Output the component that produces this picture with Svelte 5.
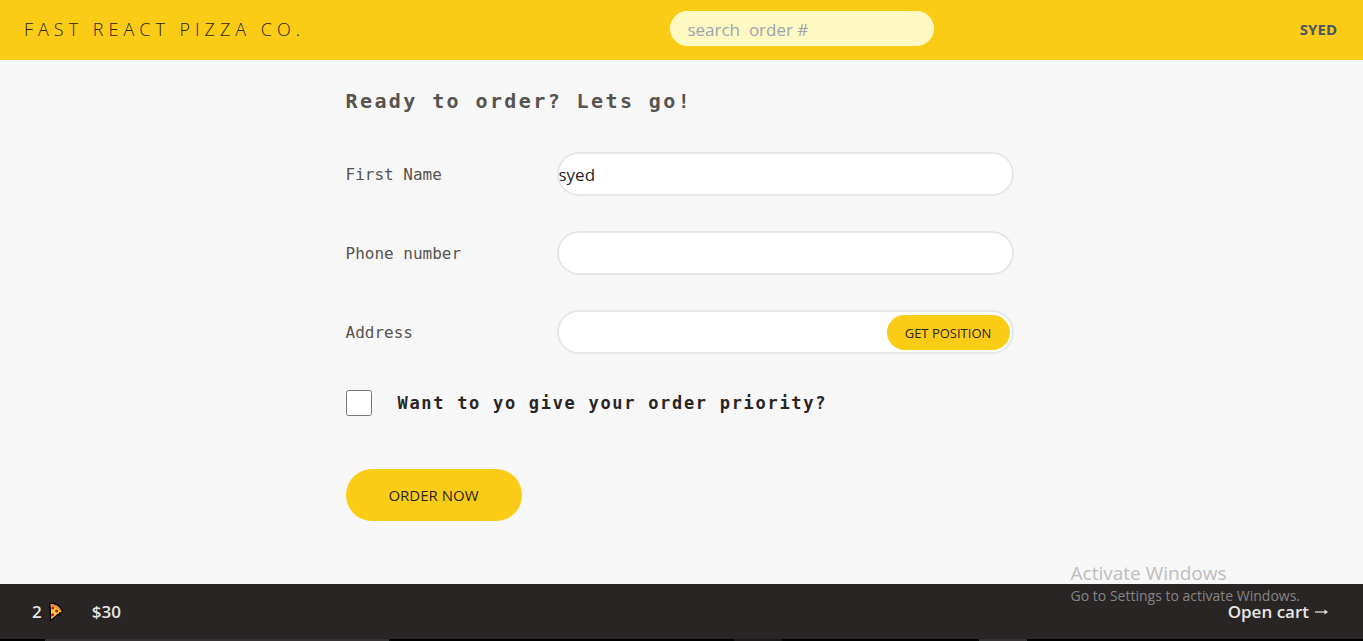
<script>
  let search = $state('');
  let firstName = $state('syed');
  let phone = $state('');
  let address = $state('');
  let priority = $state(false);
</script>

<div class="app">
  <header>
    <a class="brand" href="#home">Fast React Pizza Co.</a>
    <input class="search" type="text" aria-label="Search order number" placeholder="search  order #" bind:value={search} />
    <p class="user">syed</p>
  </header>

  <main>
    <h2>Ready to order? Lets go!</h2>
    <form onsubmit={(e) => e.preventDefault()}>
      <div class="row">
        <label for="name">First Name</label>
        <div class="field"><input id="name" type="text" bind:value={firstName} /></div>
      </div>
      <div class="row">
        <label for="phone">Phone number</label>
        <div class="field"><input id="phone" type="tel" bind:value={phone} /></div>
      </div>
      <div class="row">
        <label for="address">Address</label>
        <div class="field">
          <input id="address" type="text" bind:value={address} />
          <button class="position" type="button">Get position</button>
        </div>
      </div>
      <div class="priority">
        <input id="priority" type="checkbox" bind:checked={priority} />
        <label for="priority">Want to yo give your order priority?</label>
      </div>
      <button class="order" type="submit">Order now</button>
    </form>
  </main>

  <footer>
    <p class="summary">
      <span class="count">2
        <svg viewBox="0 0 16 20" width="16" height="20" aria-hidden="true">
          <path d="M2 1.5C7 .8 12.600 4 14.500 9.500L12.800 11.500L11.800 10.800L11.200 13L9.800 12.500L2.500 19Z" fill="#ffc83d" stroke="#0c0908" stroke-width="1.600" stroke-linejoin="round" />
          <path d="M2.500 2.300C7.500 2 11.500 4.700 13.400 8.800L11.800 9.200C9.500 5.600 6.500 4 2.500 4.200Z" fill="#f28a3c" />
          <circle cx="4.800" cy="6" r="1.500" fill="#c4182b" />
          <circle cx="8.600" cy="9" r="1.500" fill="#c4182b" />
          <circle cx="4.600" cy="12.800" r="1.500" fill="#c4182b" />
        </svg>
      </span>
      <span>$30</span>
    </p>
    <a class="cart" href="#cart">Open cart
      <svg viewBox="0 0 14 8" width="14" height="8" aria-hidden="true">
        <path d="M0 4H11" fill="none" stroke="currentColor" stroke-width="1.200" />
        <path d="M9.500 1.500L13 4L9.500 6.500Z" fill="currentColor" />
      </svg>
    </a>
  </footer>

  <div class="taskbar" aria-hidden="true">
    <span></span><span class="task"></span><span></span><span class="task dim"></span><span></span><span class="task"></span><span></span>
  </div>

  <aside class="watermark">
    <p class="title">Activate Windows</p>
    <p>Go to Settings to activate Windows.</p>
  </aside>
</div>

<style>
  :global(body) {
    margin: 0;
    background: #f7f7f7;
  }
  .app {
    position: relative;
    display: grid;
    grid-template-rows: auto 1fr auto auto;
    height: 100vh;
    font-family: 'Segoe UI', 'Open Sans', sans-serif;
    font-size: 16px;
    color: #292524;
  }
  .app * {
    box-sizing: border-box;
  }
  p, h2 {
    margin: 0;
  }
  a {
    color: inherit;
    text-decoration: none;
  }
  input, button {
    font: inherit;
    color: inherit;
  }
  header {
    display: flex;
    align-items: center;
    justify-content: space-between;
    height: 60px;
    padding: 0 26px 4px 24px;
    background: #facc15;
  }
  .brand {
    padding-top: 2px;
    font-size: 18px;
    font-weight: 300;
    letter-spacing: 5px;
    text-transform: uppercase;
  }
  .search {
    width: 264px;
    height: 35px;
    padding: 2px 17px 0;
    border: 0;
    border-radius: 999px;
    background: #fef9c3;
    font-size: 17px;
    outline: none;
  }
  .search::placeholder {
    color: #9ca3af;
    opacity: 1;
    white-space: pre;
  }
  .user {
    padding-top: 2px;
    font-size: 15px;
    font-weight: 700;
    color: #4b5563;
    text-transform: uppercase;
  }
  main {
    width: 100%;
    max-width: 672px;
    margin: 0 auto;
    padding-top: 28px;
    font-family: Consolas, 'DejaVu Sans Mono', monospace;
  }
  h2 {
    margin-bottom: 38px;
    font-size: 20px;
    line-height: 26px;
    font-weight: 700;
    letter-spacing: 0.12em;
    color: #57534e;
  }
  .row {
    display: flex;
    align-items: center;
    margin-bottom: 35px;
  }
  .row label {
    width: 211px;
    color: #57534e;
  }
  .field {
    position: relative;
    width: 457px;
  }
  .field input {
    display: block;
    width: 100%;
    height: 44px;
    padding: 0;
    border: 2px solid #e5e7eb;
    border-radius: 999px;
    background: #fff;
    font-family: 'Segoe UI', 'Open Sans', sans-serif;
    font-size: 17px;
    outline: none;
  }
  button {
    border: 0;
    border-radius: 999px;
    background: #facc15;
    font-family: 'Segoe UI', 'Open Sans', sans-serif;
    text-transform: uppercase;
    cursor: pointer;
  }
  .position {
    position: absolute;
    top: 5px;
    right: 4px;
    width: 123px;
    height: 35px;
    padding: 0;
    font-size: 13px;
    font-weight: 500;
  }
  .priority {
    display: flex;
    align-items: center;
    gap: 26px;
    min-height: 28px;
    margin-bottom: 52px;
    font-size: 17px;
    font-weight: 700;
    letter-spacing: 0.1em;
  }
  .priority input {
    width: 26px;
    height: 26px;
    margin: 0;
  }
  .order {
    width: 176px;
    height: 52px;
    padding: 0;
    font-size: 15px;
    font-weight: 500;
  }
  footer {
    display: flex;
    align-items: center;
    justify-content: space-between;
    height: 55px;
    padding: 0 34px 0 32px;
    background: #292524;
    color: #e7e5e4;
    font-size: 17px;
    font-weight: 600;
  }
  .summary, .count, .cart {
    display: flex;
    align-items: center;
  }
  .summary {
    gap: 28px;
  }
  .count, .cart {
    gap: 6px;
  }
  .taskbar {
    display: grid;
    grid-template-columns: 45fr 344fr 345fr 48fr 197fr 48fr 336fr;
    height: 2px;
    background: #000;
  }
  .task {
    background: #343233;
  }
  .dim {
    background: #1a1818;
  }
  .watermark {
    position: absolute;
    right: 63px;
    bottom: 35px;
    font-size: 14px;
    line-height: 20px;
    color: #868483;
    pointer-events: none;
  }
  .watermark .title {
    font-size: 19px;
    line-height: 25px;
    color: #bdbdbd;
  }
</style>
